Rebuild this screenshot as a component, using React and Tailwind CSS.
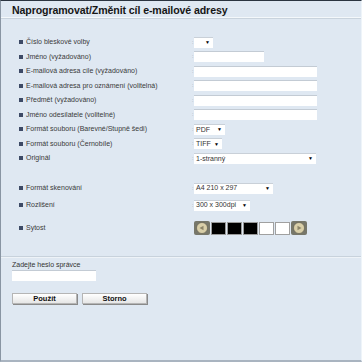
import React from 'react';

const rowsTop = [
    { label: 'Číslo bleskové volby', control: 'quick' },
    { label: 'Jméno (vyžadováno)', control: 'name' },
    { label: 'E-mailová adresa cíle (vyžadováno)', control: 'wide' },
    { label: 'E-mailová adresa pro oznámení (volitelná)', control: 'wide' },
    { label: 'Předmět (vyžadováno)', control: 'wide' },
    { label: 'Jméno odesílatele (volitelné)', control: 'wide' },
    { label: 'Formát souboru (Barevné/Stupně šedi)', control: 'pdf' },
    { label: 'Formát souboru (Černobíle)', control: 'tiff' },
    { label: 'Originál', control: 'original' },
];

const Caret = () => <span className="text-[5px] leading-none text-black">▼</span>;

const Select = ({ text, w }) => (
    <div className={`${w} h-[11px] bg-white flex items-center justify-between pl-[2px] pr-[3px] border-t border-[#c9d0d8]`}>
        <span className="text-[7px] text-[#333]">{text}</span>
        <Caret />
    </div>
);

const Input = ({ w }) => <div className={`${w} h-[11px] bg-white border-t border-[#c3cbd4]`} />;

const Control = ({ kind }) => {
    if (kind === 'quick') return <Select text="" w="w-[19px]" />;
    if (kind === 'name') return <Input w="w-[70px]" />;
    if (kind === 'wide') return <Input w="w-[123px]" />;
    if (kind === 'pdf') return <Select text="PDF" w="w-[31px]" />;
    if (kind === 'tiff') return <Select text="TIFF" w="w-[28px]" />;
    return <Select text="1-stranný" w="w-[122px]" />;
};

const Label = ({ children }) => (
    <div className="w-[191px] shrink-0 flex items-center gap-[3px] pl-[18px]">
        <span className="w-[4px] h-[4px] bg-[#3d4a66] shrink-0" />
        <span className="text-[7px] text-[#3a3a3a] whitespace-nowrap">{children}</span>
    </div>
);

const Colon = () => <span className="w-[2px] shrink-0 text-[5px] leading-none text-[#8a96a4]">:</span>;

const Knob = ({ dir }) => (
    <div className="w-[16px] h-[14px] bg-[#77776a] rounded-[2px] flex items-center justify-center">
        <svg width="12" height="12" viewBox="0 0 12 12">
            <circle cx="6" cy="6" r="5.5" fill="#d9cfa9" stroke="#5a574a" strokeWidth="0.6" />
            {dir === 'left'
                ? <path d="M3.5 6 L7.5 3.8 L7.5 8.2 Z" fill="#8c8468" />
                : <path d="M8.5 6 L4.5 3.8 L4.5 8.2 Z" fill="#8c8468" />}
        </svg>
    </div>
);

const Cell = ({ dark }) => (
    <div className={`w-[15px] h-[13px] border ${dark ? 'bg-black border-[#9a9a9a]' : 'bg-white border-[#a0a0a0]'}`} />
);

export default function App() {
    return (
        <div className="w-[362px] h-[362px] bg-[#dfe8f2] border-l border-[#8995a3] border-t border-t-[#2b3440] border-b-2 border-b-[#a9b4c0] border-r border-r-[#eef4f9] flex flex-col" style={{ fontFamily: '"Liberation Sans", Arial, sans-serif' }}>
            <div className="h-[17px] flex items-center pt-[3px] pl-[11px] border-b border-b-[#f4f8fb] shadow-[0_1px_0_#c9d3dd]">
                <h1 className="text-[10.6px] font-bold text-[#161616] tracking-[-0.1px]">Naprogramovat/Změnit cíl e-mailové adresy</h1>
            </div>

            <div className="mt-[17px] flex flex-col">
                {rowsTop.map(r => (
                    <div key={r.label} className="h-[14.5px] flex items-center">
                        <Label>{r.label}</Label>
                        <Colon />
                        <Control kind={r.control} />
                    </div>
                ))}
            </div>

            <div className="mt-[14px] flex flex-col">
                <div className="h-[17px] flex items-center">
                    <Label>Formát skenování</Label>
                    <Colon />
                    <Select text="A4 210 x 297" w="w-[79px]" />
                </div>
                <div className="h-[17px] flex items-center">
                    <Label>Rozlišení</Label>
                    <Colon />
                    <Select text="300 x 300dpi" w="w-[56px]" />
                </div>
                <div className="h-[29px] flex items-center">
                    <Label>Sytost</Label>
                    <span className="w-[2px] shrink-0" />
                    <div className="flex items-center gap-[1px]">
                        <Knob dir="left" />
                        <Cell dark />
                        <Cell dark />
                        <Cell dark />
                        <Cell />
                        <Cell />
                        <Knob dir="right" />
                    </div>
                </div>
            </div>

            <div className="mt-[13px] border-t border-[#c8d2dc] shadow-[0_1px_0_#eef3f8]" />

            <div className="pl-[11px] mt-[3px] flex flex-col">
                <span className="text-[7px] text-[#333]">Zadejte heslo správce</span>
                <div className="w-[84px] h-[11px] bg-white border-t border-[#c3cbd4]" />
                <div className="mt-[12px] flex gap-[5px]">
                    <button className="w-[65px] h-[11px] bg-gradient-to-b from-white to-[#e6e6e6] border border-[#b5b5b5] shadow-[1px_1px_0_#8a8a8a] text-[7.5px] font-bold text-[#111] leading-none">Použít</button>
                    <button className="w-[65px] h-[11px] bg-gradient-to-b from-white to-[#e6e6e6] border border-[#b5b5b5] shadow-[1px_1px_0_#8a8a8a] text-[7.5px] font-bold text-[#111] leading-none">Storno</button>
                </div>
            </div>
        </div>
    );
}
